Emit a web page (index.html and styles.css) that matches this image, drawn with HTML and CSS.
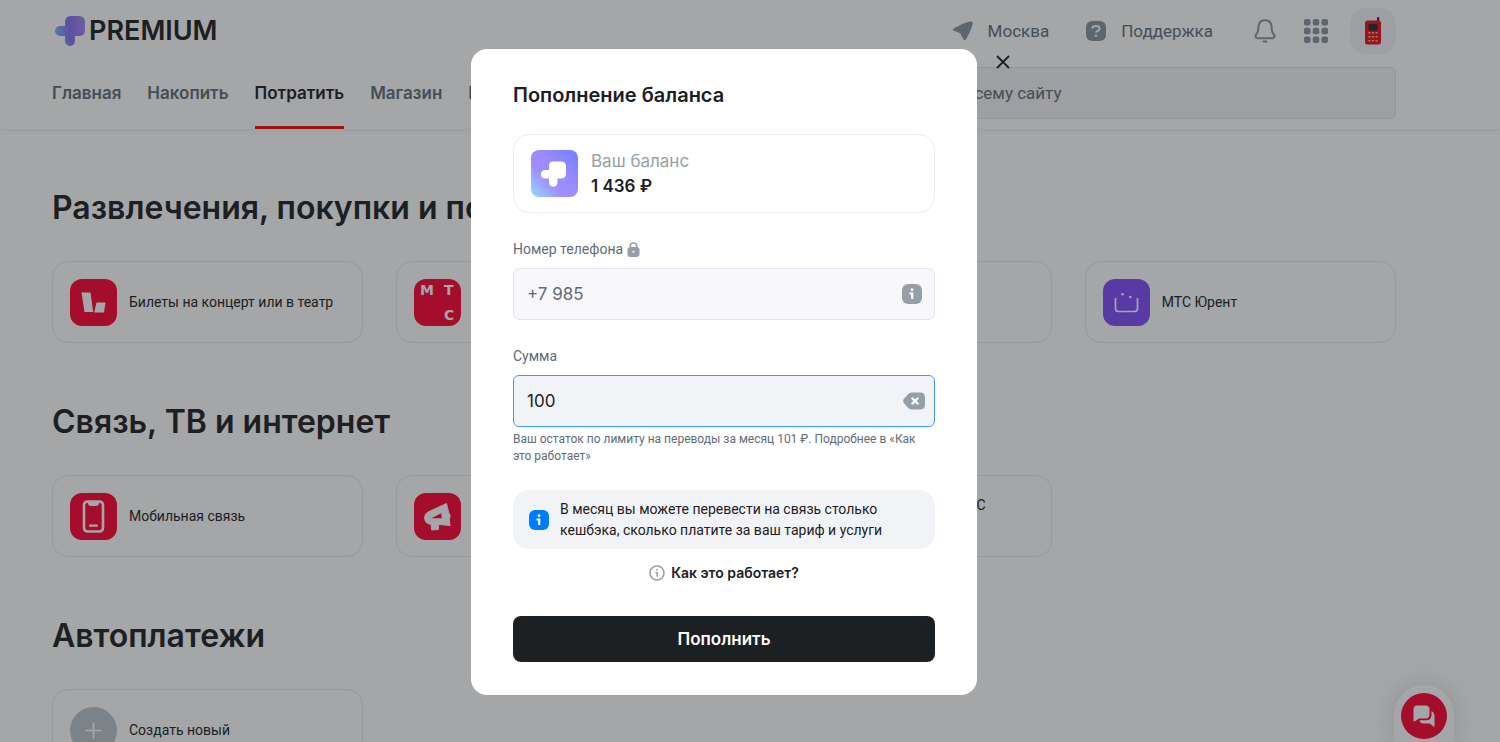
FILE: index.html
```html
<!DOCTYPE html>
<html lang="ru">
<head>
  <meta charset="UTF-8">
  <meta name="viewport" content="width=device-width, initial-scale=1.0">
  <title>Пополнение баланса</title>
  <link rel="stylesheet" href="styles.css">
</head>
<body>

  <div class="page">
    <header class="header">
      <div class="header-top">
        <a href="#" class="logo">
          <svg width="30" height="30" viewBox="0 0 30 30">
            <defs>
              <linearGradient id="logo-fill" x1="0" y1="0.5" x2="1" y2="0.4">
                <stop offset="0" stop-color="#7db4f0"/>
                <stop offset="0.5" stop-color="#8a6ff5"/>
                <stop offset="1" stop-color="#a888f0"/>
              </linearGradient>
            </defs>
            <path d="M16 0h8q6 0 6 6v8q0 6-6 6h-4v5a5 5 0 0 1-10 0v-5H5a5 5 0 0 1 0-10h5V6q0-6 6-6z" fill="url(#logo-fill)"/>
          </svg>
          <span>PREMIUM</span>
        </a>
        <div class="header-links">
          <a href="#" class="header-link">
            <svg width="20" height="20" viewBox="0 0 20 20">
              <path d="M1.500 7C-.3 7.700-.4 9.300 1.500 10l4.600 1.700c.9.300 1.400.8 1.800 1.700l2.400 4.900c.7 1.500 2.200 1.400 2.900-.2C15.500 13.500 18.500 8.700 19.600 3.300c.4-1.900-.5-2.900-2.300-2.700C12 1.300 6.500 4.700 1.500 7z" fill="#8793a0"/>
            </svg>
            Москва
          </a>
          <a href="#" class="header-link">
            <svg width="20" height="20" viewBox="0 0 20 20">
              <rect width="20" height="20" rx="6" fill="#8793a0"/>
              <path d="M6.200 7.600Q6.500 5 10 5t3.600 2.500q0 1.700-2 2.400-1.500.5-1.500 1.900" fill="none" stroke="#fff" stroke-width="2"/>
              <circle cx="10" cy="14.700" r="1.300" fill="#fff"/>
            </svg>
            Поддержка
          </a>
          <button type="button" class="icon-button" aria-label="Уведомления">
            <svg width="22" height="24" viewBox="0 0 22 24">
              <path d="M11 1.200c-4 0-6.300 2.800-6.600 6.500l-.3 3.800c-.1 1-.5 1.700-1.100 2.700l-1.200 2c-.8 1.600 0 3 1.900 3h14.600c1.900 0 2.700-1.400 1.900-3l-1.200-2c-.6-1-1-1.700-1.100-2.700l-.3-3.800C17.300 4 15 1.200 11 1.200z" fill="none" stroke="#8793a0" stroke-width="2"/>
              <rect x="8.500" y="21.500" width="5" height="2" rx="1" fill="#8793a0"/>
            </svg>
          </button>
          <button type="button" class="icon-button" aria-label="Все сервисы">
            <svg width="24" height="24" viewBox="0 0 24 24" fill="#8793a0">
              <rect width="6.500" height="6.500" rx="2"/><rect x="8.750" width="6.500" height="6.500" rx="2"/><rect x="17.500" width="6.500" height="6.500" rx="2"/>
              <rect y="8.750" width="6.500" height="6.500" rx="2"/><rect x="8.750" y="8.750" width="6.500" height="6.500" rx="2"/><rect x="17.500" y="8.750" width="6.500" height="6.500" rx="2"/>
              <rect y="17.500" width="6.500" height="6.500" rx="2"/><rect x="8.750" y="17.500" width="6.500" height="6.500" rx="2"/><rect x="17.500" y="17.500" width="6.500" height="6.500" rx="2"/>
            </svg>
          </button>
          <button type="button" class="avatar" aria-label="Профиль">
            <svg width="18" height="28" viewBox="0 0 18 28">
              <rect x="13" y="0" width="2.200" height="6" rx="1" fill="#3a2028"/>
              <rect x="1" y="3.500" width="16" height="24" rx="2.500" fill="#f00a14"/>
              <rect x="4.500" y="7" width="9" height="6.500" rx="1" fill="#1d2c3c"/>
              <g fill="#ffb9b9">
                <rect x="4.500" y="15" width="2" height="1.500"/><rect x="8" y="15" width="2" height="1.500"/><rect x="11.500" y="15" width="2" height="1.500"/>
                <rect x="4.500" y="19" width="2" height="1.500"/><rect x="8" y="19" width="2" height="1.500"/><rect x="11.500" y="19" width="2" height="1.500"/>
                <rect x="4.500" y="23" width="2" height="1.500"/><rect x="8" y="23" width="2" height="1.500"/><rect x="11.500" y="23" width="2" height="1.500"/>
              </g>
            </svg>
          </button>
        </div>
      </div>
      <div class="header-bottom">
        <nav class="nav">
          <a href="#">Главная</a>
          <a href="#">Накопить</a>
          <a href="#" class="active">Потратить</a>
          <a href="#">Магазин</a>
          <a href="#">История</a>
        </nav>
        <input type="search" class="search" placeholder="Поиск по всему сайту" aria-label="Поиск">
      </div>
    </header>

    <main class="content">
      <section class="section">
        <h2>Развлечения, покупки и поездки</h2>
        <div class="cards">
          <a href="#" class="card">
            <svg class="card-icon" viewBox="0 0 47 47">
              <rect width="47" height="47" rx="12" fill="#ff0032"/>
              <path d="M11.500 13.500h9l2.700 19.500H14.500z" fill="#fff"/>
              <path d="M26.500 23.500h9L34 33.500h-9.800z" fill="#fff"/>
            </svg>
            <span>Билеты на концерт или в театр</span>
          </a>
          <a href="#" class="card">
            <svg class="card-icon letters" viewBox="0 0 47 47">
              <rect width="47" height="47" rx="12" fill="#ff0032"/>
              <text x="6" y="16">М</text>
              <text x="30" y="16">Т</text>
              <text x="30" y="41">С</text>
            </svg>
            <span>Экосистема МТС</span>
          </a>
          <a href="#" class="card">
            <span class="card-icon red"></span>
            <span>Подписки</span>
          </a>
          <a href="#" class="card">
            <svg class="card-icon" viewBox="0 0 47 47">
              <rect width="47" height="47" rx="12" fill="#7f4bfc"/>
              <path d="M12.500 19v10.500q0 3 3 3h16q3 0 3-3V19" fill="none" stroke="#fff" stroke-width="1.700"/>
              <circle cx="19.500" cy="15.300" r="1.300" fill="#fff"/>
              <circle cx="27.300" cy="18" r="1.300" fill="#fff"/>
            </svg>
            <span>МТС Юрент</span>
          </a>
        </div>
      </section>

      <section class="section">
        <h2>Связь, ТВ и интернет</h2>
        <div class="cards">
          <a href="#" class="card">
            <svg class="card-icon" viewBox="0 0 47 47">
              <rect width="47" height="47" rx="12" fill="#ff0032"/>
              <path d="M18 8.500h11q4 0 4 4v22q0 4-4 4H18q-4 0-4-4v-22q0-4 4-4z" fill="none" stroke="#fff" stroke-width="2.600"/>
              <path d="M18 8.500h11v1.500q0 3-3 3h-5q-3 0-3-3z" fill="#fff"/>
              <rect x="19" y="31.500" width="9" height="2.200" rx="1" fill="#fff"/>
            </svg>
            <span>Мобильная связь</span>
          </a>
          <a href="#" class="card">
            <svg class="card-icon" viewBox="0 0 47 47">
              <rect width="47" height="47" rx="12" fill="#ff0032"/>
              <path d="M32.500 10.500L14.500 18.800C11.500 20.300 10.400 22.700 10.700 25.600 11.100 29.300 13.500 31 17 31.300L17.600 37l6.700-.4.300-5.200L36 32.500l-.7-6.200q2.200-3.600-.7-6.900z" fill="#fff" stroke="#fff" stroke-linejoin="round"/>
              <path d="M17.500 25.200l9.700-5 .6 5z" fill="#ff0032"/>
            </svg>
            <span>Домашний интернет</span>
          </a>
          <a href="#" class="card">
            <span class="card-icon red"></span>
            <span>Оплата по лицевому МТС<br>счёту</span>
          </a>
        </div>
      </section>

      <section class="section">
        <h2>Автоплатежи</h2>
        <div class="cards">
          <a href="#" class="card">
            <svg class="card-icon" viewBox="0 0 47 47">
              <circle cx="23.500" cy="23.500" r="23.500" fill="#bbc5cb"/>
              <path d="M23.500 15.500v16M15.500 23.500h16" stroke="#fff" stroke-width="1.700"/>
            </svg>
            <span>Создать новый</span>
          </a>
        </div>
      </section>
    </main>

    <div class="chat">
      <button type="button" aria-label="Чат">
        <svg width="24" height="24" viewBox="0 0 24 24" fill="#fff">
          <path d="M5.500 1.500h8q4 0 4 4v5q0 4-4 4H7l-4.500 3q-1 .4-1-.7V5.500q0-4 4-4z"/>
          <path d="M19.500 7q3 1.500 3 5v10q0 1-1 .4l-3.800-2.900h-6q-3.500 0-4.200-3.200h6.500q5.500 0 5.500-5.500z"/>
        </svg>
      </button>
    </div>
  </div>

  <div class="overlay">
    <div class="dialog" role="dialog" aria-modal="true" aria-labelledby="dialog-title">
      <button type="button" class="close" aria-label="Закрыть">
        <svg width="14" height="14" viewBox="0 0 14 14">
          <path d="M1 1l12 12M13 1L1 13" stroke="#1d2023" stroke-width="1.800"/>
        </svg>
      </button>

      <h1 id="dialog-title">Пополнение баланса</h1>

      <div class="balance">
        <svg width="47" height="47" viewBox="0 0 47 47">
          <defs>
            <linearGradient id="balance-fill" x1="0" y1="1" x2="1" y2="0">
              <stop offset="0" stop-color="#93dcff"/>
              <stop offset="0.35" stop-color="#a18fff"/>
              <stop offset="0.6" stop-color="#9a8aff"/>
              <stop offset="1" stop-color="#6f80ff"/>
            </linearGradient>
          </defs>
          <rect width="47" height="47" rx="8" fill="url(#balance-fill)"/>
          <path d="M22 11.500h8q5 0 5 5v7q0 5-5 5h-3.500v4a4.200 4.200 0 0 1-8.500 0v-4h-4a4.200 4.200 0 0 1 0-8.500h4v-4q0-4.500 4-4.500z" fill="#fff"/>
        </svg>
        <div>
          <p class="balance-label">Ваш баланс</p>
          <p class="balance-value">1 436 ₽</p>
        </div>
      </div>

      <form class="form">
        <div class="field">
          <label for="phone">
            Номер телефона
            <svg width="13" height="15" viewBox="0 0 13 15">
              <path d="M3.300 6V4.200a3.200 3.200 0 0 1 6.400 0V6" fill="none" stroke="#969fa8" stroke-width="1.500"/>
              <rect x="0.500" y="5" width="12" height="10" rx="3" fill="#969fa8"/>
              <circle cx="6.500" cy="9.800" r="1" fill="#fff"/>
            </svg>
          </label>
          <div class="input-box disabled">
            <input type="tel" id="phone" value="+7 985" disabled>
            <svg width="20" height="20" viewBox="0 0 20 20">
              <rect width="20" height="20" rx="6" fill="#969fa8"/>
              <circle cx="10" cy="5.700" r="1.400" fill="#fff"/>
              <path d="M7.500 9.500h2.700V15" fill="none" stroke="#fff" stroke-width="2.200"/>
            </svg>
          </div>
        </div>

        <div class="field">
          <label for="sum">Сумма</label>
          <div class="input-box focused">
            <input type="text" id="sum" value="100">
            <button type="button" class="clear" aria-label="Очистить">
              <svg width="22" height="18" viewBox="0 0 22 18">
                <path d="M8.500.5H17q5 0 5 5v7q0 5-5 5H8.500q-2 0-3.500-1.700L1 11.200Q-.8 9 1 6.800l4-4.600Q6.500.5 8.500.5z" fill="#969fa8"/>
                <path d="M8.700 5.700l6.600 6.600M15.300 5.700l-6.600 6.600" stroke="#fff" stroke-width="2.200"/>
              </svg>
            </button>
          </div>
          <p class="hint">Ваш остаток по лимиту на переводы за месяц 101 ₽. Подробнее в «Как это работает»</p>
        </div>

        <div class="notice">
          <svg width="20" height="20" viewBox="0 0 20 20">
            <rect width="20" height="20" rx="6" fill="#007cff"/>
            <circle cx="10" cy="5.700" r="1.400" fill="#fff"/>
            <path d="M7.500 9.500h2.700V15" fill="none" stroke="#fff" stroke-width="2.200"/>
          </svg>
          <p>В месяц вы можете перевести на связь столько кешбэка, сколько платите за ваш тариф и услуги</p>
        </div>

        <button type="button" class="how">
          <svg width="16" height="16" viewBox="0 0 16 16">
            <circle cx="8" cy="8" r="7" fill="none" stroke="#969fa8" stroke-width="1.600"/>
            <circle cx="8" cy="4.900" r="0.900" fill="#969fa8"/>
            <path d="M6.500 7.700h1.700v4" fill="none" stroke="#969fa8" stroke-width="1.500"/>
          </svg>
          Как это работает?
        </button>

        <button type="submit" class="submit">Пополнить</button>
      </form>
    </div>
  </div>

</body>
</html>
```

FILE: styles.css
```css
* {
  box-sizing: border-box;
}

body {
  margin: 0;
  height: 100vh;
  overflow: hidden;
  font-family: Roboto, Arial, sans-serif;
  color: #1d2023;
  background-color: #fff;
}

h1, h2, p {
  margin: 0;
}

a {
  color: inherit;
  text-decoration: none;
}

button {
  padding: 0;
  border: none;
  background: none;
  font-family: inherit;
  color: inherit;
  cursor: pointer;
}

svg {
  display: block;
  flex-shrink: 0;
}

.logo, .nav, h1, h2, .balance, .input-box, .how, .submit {
  font-family: Inter, Arial, sans-serif;
}

.page {
  height: 100%;
  overflow: hidden;
}

/* Header */
.header {
  padding: 8px 104px 0 52px;
  border-bottom: 1px solid #f2f3f7;
  box-shadow: 0 2px 6px rgba(0, 0, 0, 0.04);
}

.header-top {
  display: flex;
  justify-content: space-between;
  align-items: center;
  height: 46px;
}

.logo {
  display: flex;
  align-items: center;
  gap: 4px;
  padding-left: 3px;
  font-size: 27px;
  font-weight: 600;
  line-height: 32px;
}

.header-links {
  display: flex;
  align-items: center;
  color: #626c77;
}

.header-link {
  display: flex;
  align-items: center;
  gap: 15px;
  margin-right: 37px;
  font-size: 17px;
}

.icon-button {
  margin-right: 28px;
}

.header-link + .icon-button {
  margin-left: 4px;
}

.avatar {
  display: flex;
  align-items: center;
  justify-content: center;
  width: 46px;
  height: 46px;
  margin-left: -6px;
  border-radius: 16px;
  background-color: #f2f3f7;
}

.header-bottom {
  display: flex;
  justify-content: space-between;
  padding-top: 13px;
}

.nav {
  display: flex;
  gap: 26px;
  height: 62px;
  font-size: 17px;
  font-weight: 600;
  line-height: 52px;
  color: #626c77;
}

.nav .active {
  color: #1d2023;
  border-bottom: 3px solid #ff0023;
}

.search {
  width: 556px;
  height: 52px;
  padding: 0 46px;
  border: 1px solid #e2e5eb;
  border-radius: 6px;
  background-color: #f2f3f7;
  font-family: inherit;
  font-size: 17px;
}

.search::placeholder {
  color: #626c77;
}

/* Sections with cards */
.content {
  padding: 58px 104px 0 52px;
}

.section {
  margin-bottom: 59px;
}

.section h2 {
  margin-bottom: 33px;
  font-size: 32px;
  font-weight: 600;
  line-height: 40px;
}

.cards {
  display: grid;
  grid-template-columns: repeat(4, 1fr);
  gap: 33px;
}

.card {
  display: flex;
  align-items: center;
  gap: 12px;
  height: 82px;
  padding: 0 17px;
  border: 1px solid #e8e9eb;
  border-radius: 16px;
  font-size: 14px;
  line-height: 21px;
}

.card-icon {
  width: 47px;
  height: 47px;
  flex-shrink: 0;
}

.card-icon.red {
  border-radius: 12px;
  background-color: #ff0032;
}

.letters text {
  font-family: "DejaVu Sans", sans-serif;
  font-size: 14px;
  font-weight: 700;
  fill: #fff;
}

/* Chat widget */
.chat {
  position: fixed;
  right: 46px;
  bottom: 0;
  padding: 8px 7px 3px;
  border-radius: 30px 30px 0 0;
  background-color: #fff;
  box-shadow: 0 0 24px rgba(0, 0, 0, 0.16);
}

.chat button {
  display: flex;
  align-items: center;
  justify-content: center;
  width: 46px;
  height: 46px;
  border-radius: 50%;
  background-color: #ff0032;
}

/* Dialog */
.overlay {
  position: fixed;
  inset: 0;
  display: flex;
  align-items: center;
  justify-content: center;
  padding: 2px 52px 0 0;
  background-color: rgba(29, 32, 35, 0.4);
}

.dialog {
  position: relative;
  width: 100%;
  max-width: 506px;
  padding: 32px 42px 33px;
  border-radius: 16px;
  background-color: #fff;
}

.close {
  position: absolute;
  top: 6px;
  right: -33px;
}

.dialog h1 {
  margin-bottom: 25px;
  font-size: 20px;
  font-weight: 600;
  line-height: 28px;
}

.balance {
  display: flex;
  align-items: center;
  gap: 13px;
  height: 79px;
  margin-bottom: 26px;
  padding: 0 17px;
  border: 1px solid #ebebf2;
  border-radius: 16px;
  font-size: 17px;
  line-height: 25px;
}

.balance-label {
  color: #969fa8;
}

.balance-value {
  font-weight: 600;
}

.form {
  display: flex;
  flex-direction: column;
}

.field label {
  display: flex;
  align-items: center;
  gap: 4px;
  margin-bottom: 8px;
  font-size: 14px;
  line-height: 21px;
  color: #626c77;
}

.field + .field {
  margin-top: 26px;
}

.input-box {
  display: flex;
  align-items: center;
  height: 52px;
  padding: 0 12px 0 13px;
  border: 1px solid #e6e6f0;
  border-radius: 6px;
  background-color: #f2f3f7;
}

.input-box.disabled {
  background-color: #f8f8fb;
}

.input-box.focused {
  padding-right: 9px;
  border-color: #409dff;
}

.input-box input {
  flex: 1;
  min-width: 0;
  padding: 0;
  border: none;
  outline: none;
  background: none;
  font-family: inherit;
  font-size: 17px;
  color: #1d2023;
}

.input-box input:disabled {
  color: #626c77;
}

.hint {
  margin-top: 4px;
  font-size: 12px;
  line-height: 17px;
  color: #626c77;
}

.notice {
  display: flex;
  align-items: center;
  gap: 11px;
  margin-top: 25px;
  padding: 9px 16px 8px;
  border-radius: 16px;
  background-color: #f2f3f7;
  font-size: 14px;
  line-height: 21px;
}

.how {
  display: flex;
  align-items: center;
  align-self: center;
  gap: 6px;
  margin-top: 14px;
  font-size: 14px;
  font-weight: 600;
  line-height: 20px;
}

.submit {
  height: 46px;
  margin-top: 33px;
  border-radius: 8px;
  background-color: #1d2023;
  font-size: 17px;
  font-weight: 600;
  color: #fff;
}
```
